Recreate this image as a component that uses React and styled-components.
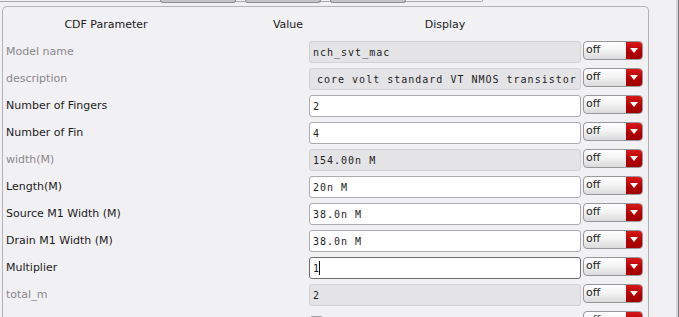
import React from "react"
import styled, { createGlobalStyle } from "styled-components"

const GlobalStyle = createGlobalStyle`
  html, body {
    margin: 0;
    padding: 0;
    background: #f1f0f3;
    overflow: hidden;
  }
`

const Screen = styled.div`
  width: 679px;
  height: 317px;
  display: flex;
  overflow: hidden;
  font-family: "DejaVu Sans", "Liberation Sans", sans-serif;
  background: #f1f0f3;
`

const Main = styled.div`
  flex: 1;
  display: flex;
  flex-direction: column;
`

const ScrollEdge = styled.div`
  width: 2px;
  background: #d6d5d8;
  border-right: 1px solid #7c7c80;
`

const TopStrip = styled.div`
  width: 483px;
  height: 2px;
  border-bottom: 1px solid #a9a9ad;
  border-bottom-right-radius: 4px;
  border-right: 1px solid #a9a9ad;
  display: flex;
  gap: 9px;
  padding-left: 160px;
  box-sizing: border-box;
  margin-bottom: 4px;
`

const TabStub = styled.div`
  width: 74px;
  height: 2px;
  background: #c4c4c8;
  border: 1px solid #8e8e92;
  border-top: none;
  border-radius: 0 0 6px 6px;
`

const Panel = styled.div`
  margin-left: 2px;
  width: 647px;
  flex: 1;
  border: 1px solid #b4b4b8;
  border-bottom: none;
  border-radius: 5px 5px 0 0;
  box-sizing: border-box;
  padding-left: 3px;
`

const Header = styled.div`
  height: 34px;
  display: grid;
  grid-template-columns: 200px 164px 150px;
  align-items: center;
  font-size: 11px;
  color: #202020;
  padding-top: 1px;
  box-sizing: border-box;
`

const HeadCell = styled.div`
  text-align: center;
`

const Row = styled.div`
  height: 27px;
  display: grid;
  grid-template-columns: 301px 272px 60px;
  column-gap: 2px;
  align-items: start;
`

const Label = styled.div`
  height: 22px;
  line-height: 22px;
  font-size: 11px;
  color: ${(p) => (p.$dim ? "#8a898d" : "#1c1c1c")};
  white-space: nowrap;
`

const Field = styled.div`
  height: 22px;
  box-sizing: border-box;
  border: 1px solid ${(p) => (p.$focus ? "#6e6e72" : p.$ro ? "#d2d1d5" : "#acacb0")};
  border-radius: 3px;
  background: ${(p) => (p.$ro ? "#e4e3e6" : "#ffffff")};
  padding-left: ${(p) => p.$indent || 3}px;
  font-family: "DejaVu Sans Mono", "Liberation Mono", monospace;
  font-size: 10px;
  letter-spacing: 1px;
  line-height: 21px;
  color: #1e1e1e;
  white-space: nowrap;
  overflow: hidden;
`

const Caret = styled.span`
  display: inline-block;
  width: 1px;
  height: 14px;
  background: #111;
  vertical-align: -3px;
  margin-left: -1px;
`

const Select = styled.div`
  height: 19px;
  box-sizing: border-box;
  border: 1px solid #98989c;
  border-radius: 4px;
  display: flex;
  overflow: hidden;
  background: linear-gradient(#ffffff, #f4f4f4 45%, #dadada);
`

const SelectText = styled.div`
  flex: 1;
  font-size: 11px;
  line-height: 16px;
  padding-left: 2px;
  color: #1c1c1c;
`

const SelectArrow = styled.div`
  width: 16px;
  background: linear-gradient(#d81818, #b00000 60%, #a00000);
  display: flex;
  align-items: center;
  justify-content: center;
`

const CheckCell = styled.div`
  padding: 5px 0 0 1px;
`

const CheckBox = styled.div`
  width: 11px;
  height: 11px;
  border: 1px solid #a0a0a4;
  border-radius: 2px;
  background: linear-gradient(#fff, #e8e8e8);
`

const rows = [
  { label: "Model name", dim: true, value: "nch_svt_mac", ro: true },
  { label: "description", dim: true, value: "core volt standard VT NMOS transistor", ro: true, indent: 7 },
  { label: "Number of Fingers", value: "2" },
  { label: "Number of Fin", value: "4" },
  { label: "width(M)", dim: true, value: "154.00n M", ro: true },
  { label: "Length(M)", value: "20n M" },
  { label: "Source M1 Width (M)", value: "38.0n M" },
  { label: "Drain M1 Width (M)", value: "38.0n M" },
  { label: "Multiplier", value: "1", focus: true },
  { label: "total_m", dim: true, value: "2", ro: true },
  { label: "Multi Finger Layout", check: true },
]

const Dropdown = () => (
  <Select>
    <SelectText>off</SelectText>
    <SelectArrow>
      <svg width="8" height="5" viewBox="0 0 8 5">
        <path d="M0 0 L8 0 L4 5 Z" fill="#ffffff" />
      </svg>
    </SelectArrow>
  </Select>
)

const App = () => {
  return (
    <Screen>
      <GlobalStyle />
      <Main>
        <TopStrip>
          <TabStub />
          <TabStub />
          <TabStub />
        </TopStrip>
        <Panel>
          <Header>
            <HeadCell>CDF Parameter</HeadCell>
            <HeadCell>Value</HeadCell>
            <HeadCell>Display</HeadCell>
          </Header>
          {rows.map((r) => (
            <Row key={r.label}>
              <Label $dim={r.dim}>{r.label}</Label>
              {r.check ? (
                <CheckCell>
                  <CheckBox />
                </CheckCell>
              ) : (
                <Field $ro={r.ro} $focus={r.focus} $indent={r.indent}>
                  {r.value}
                  {r.focus && <Caret />}
                </Field>
              )}
              <Dropdown />
            </Row>
          ))}
        </Panel>
      </Main>
      <ScrollEdge />
    </Screen>
  )
}

export default App
